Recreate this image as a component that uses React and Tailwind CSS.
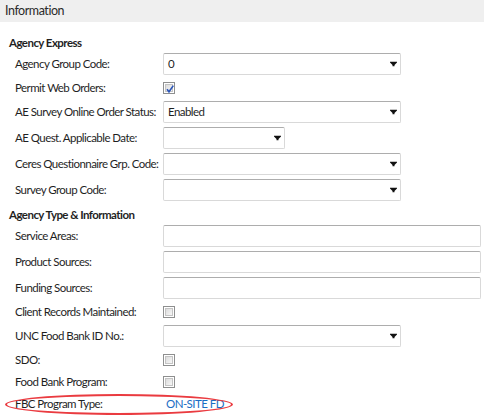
import React from "react";

function Arrow() {
  return (
    <svg width="7" height="5" viewBox="0 0 7 5" className="absolute right-[3px] top-1/2 -translate-y-1/2">
      <path d="M0 0h7v1L4.5 3.5V5h-2V3.5L0 1z" fill="#111" />
    </svg>
  );
}

function Box({ w, text, arrow }) {
  return (
    <div
      className={`relative h-[22px] ${w} shrink-0 border border-[#d9d9d9] border-t-[#adadad] rounded-[2px] bg-white flex items-center pl-[4px]`}
    >
      <span>{text}</span>
      {arrow && <Arrow />}
    </div>
  );
}

function Check({ checked }) {
  return (
    <div className="w-[12px] h-[12px] border border-[#8e8f8f] bg-white p-[1px] shrink-0">
      <div className="w-full h-full bg-gradient-to-br from-[#dcdcdc] to-[#f7f7f7] border border-[#c4c4c4] relative">
        {checked && (
          <svg width="10" height="10" viewBox="0 0 10 10" className="absolute -left-[1px] -top-[1px]">
            <path d="M2 5.2l2 2.6L8.3 1.6" stroke="#2c56b8" strokeWidth="1.6" fill="none" />
          </svg>
        )}
      </div>
    </div>
  );
}

function Label({ children }) {
  return <div className="w-[163px] shrink-0 pl-[15px] whitespace-nowrap">{children}</div>;
}

function InputRow({ label, w = "w-[238px]", text = "", arrow = true }) {
  return (
    <div className="flex items-center h-[22px] mb-[4px]">
      <Label>{label}</Label>
      <Box w={w} text={text} arrow={arrow} />
    </div>
  );
}

function CheckRow({ label, checked }) {
  return (
    <div className="flex items-center h-[18px] mb-[4px]">
      <Label>{label}</Label>
      <Check checked={checked} />
    </div>
  );
}

function Heading({ children }) {
  return <div className="h-[20px] flex items-center pl-[9px] font-bold whitespace-nowrap">{children}</div>;
}

export default function App() {
  return (
    <div className="w-[484px] h-[416px] bg-white overflow-hidden font-['Lato',sans-serif] text-[11.5px] tracking-[-0.55px] text-[#1f1f1f] leading-none">
      <div className="h-[22px] bg-[#efefef] flex items-center pl-[5px] text-[12.5px] tracking-[-0.45px] text-[#2a2a2a]">
        Information
      </div>
      <div className="pt-[11px]">
        <Heading>Agency Express</Heading>
        <InputRow label="Agency Group Code:" text="0" />
        <CheckRow label="Permit Web Orders:" checked />
        <InputRow label="AE Survey Online Order Status:" text="Enabled" />
        <InputRow label="AE Quest. Applicable Date:" w="w-[122px]" />
        <InputRow label="Ceres Questionnaire Grp. Code:" />
        <InputRow label="Survey Group Code:" />
        <Heading>Agency Type &amp; Information</Heading>
        <InputRow label="Service Areas:" w="w-[318px]" arrow={false} />
        <InputRow label="Product Sources:" w="w-[318px]" arrow={false} />
        <InputRow label="Funding Sources:" w="w-[318px]" arrow={false} />
        <CheckRow label="Client Records Maintained:" />
        <InputRow label="UNC Food Bank ID No.:" />
        <CheckRow label="SDO:" />
        <CheckRow label="Food Bank Program:" />
        <div className="relative flex items-center h-[18px]">
          <Label>FBC Program Type:</Label>
          <span className="pl-[3px] text-[#1a6ec4]">ON-SITE FD</span>
          <div className="absolute left-[5px] -top-[1px] w-[228px] h-[21px] border-2 border-[#ea3b40] rounded-[50%]" />
        </div>
      </div>
    </div>
  );
}
